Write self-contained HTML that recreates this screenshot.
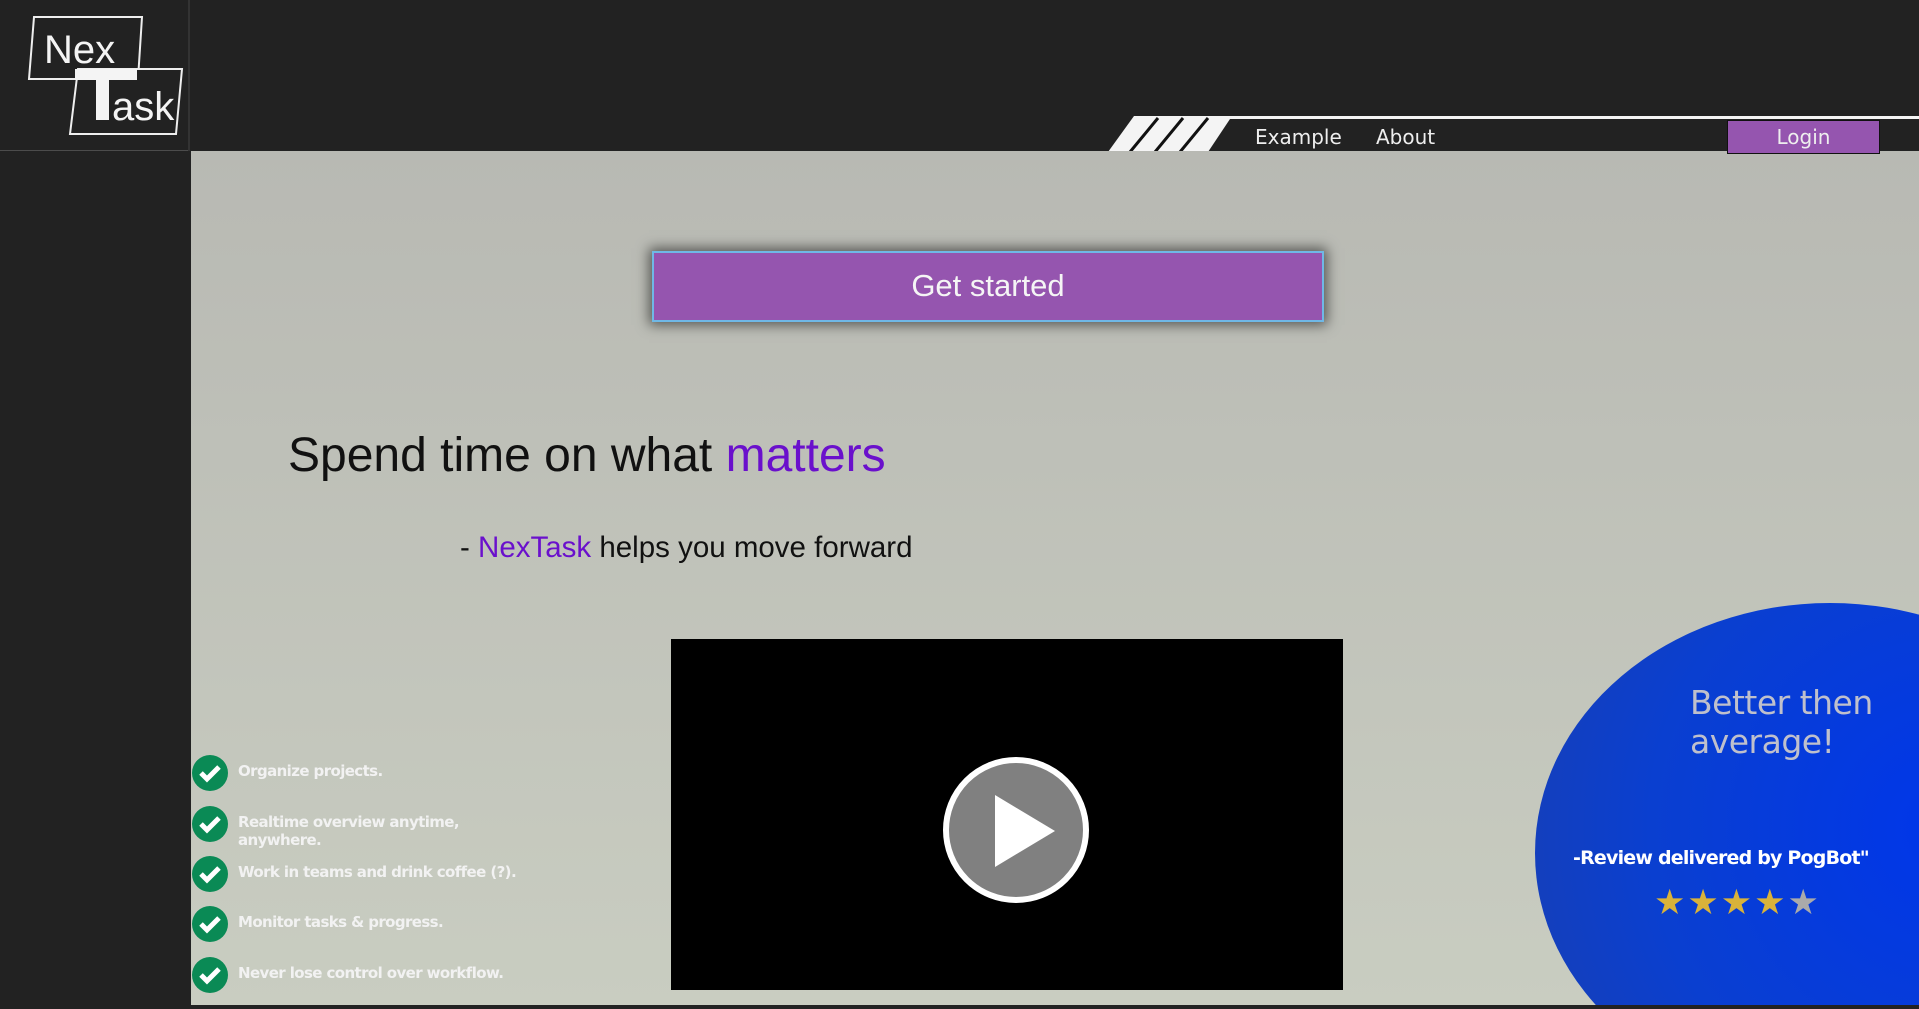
<!DOCTYPE html>
<html style="overflow:hidden"><head><meta charset="utf-8">
<style>
*{margin:0;padding:0;box-sizing:border-box}
body{width:1919px;height:1009px;background:#222;overflow:hidden;position:relative;font-family:"Liberation Sans",sans-serif}
.main{position:absolute;left:191px;top:151px;width:1728px;height:854px;background:linear-gradient(#b8b9b3,#c9cdc1);overflow:hidden}
.hdrline{position:absolute;left:1200px;top:116px;width:719px;height:3px;background:#f4f4f4}
.nav{position:absolute;top:125px;color:#eee;font-size:20px;font-family:"DejaVu Sans","Liberation Sans",sans-serif}
.login{position:absolute;left:1727px;top:120px;width:153px;height:34px;background:#9555af;border:1px solid #111;color:#eee;font-size:20px;text-align:center;line-height:32px;font-family:"DejaVu Sans",sans-serif}
.btn{position:absolute;left:461px;top:100px;width:672px;height:71px;background:#9555af;border:2px solid #6fb8e6;box-shadow:0 0 12px 3px rgba(0,0,0,.55);color:#f5f5f5;font-size:31px;text-align:center;line-height:66px}
h1{position:absolute;left:97px;top:277px;font-weight:normal;font-size:48px;color:#111;white-space:nowrap}
.p{color:#6a10cc}
.sub{position:absolute;left:269px;top:380px;font-size:29.5px;color:#111;white-space:nowrap}
.video{position:absolute;left:480px;top:488px;width:672px;height:351px;background:#000}
.feat{position:absolute;left:1px;color:#f2f2f2;font-size:15px;font-weight:bold;font-family:"DejaVu Sans",sans-serif;letter-spacing:-.6px}
.feat svg{position:absolute;left:0;top:0}
.feat span{position:absolute;left:46px;top:7px;width:280px;line-height:18px;white-space:nowrap}
.blob{position:absolute;left:1344px;top:452px;width:590px;height:500px;border-radius:50%;background:radial-gradient(circle at 70% 45%,#0036ea,#0a3fd0 60%,#1a3fb0)}
.better{position:absolute;left:1499px;top:532px;color:#bfc0cc;font-size:33px;line-height:39px;font-family:"DejaVu Sans",sans-serif;letter-spacing:-.5px}
.rev{position:absolute;left:1382px;top:696px;color:#fff;font-size:19px;font-weight:bold;font-family:"DejaVu Sans",sans-serif;letter-spacing:-.8px;white-space:nowrap}
.stars{position:absolute;left:1463px;top:732px;font-size:35px;letter-spacing:2px;white-space:nowrap}
</style></head><body>
<svg style="position:absolute;left:0;top:0" width="191" height="151">
<polygon points="34,17 142,17 138,79 29,79" fill="#222" stroke="#eee" stroke-width="2"/>
<polygon points="78,69 182,69 176,134 70,134" fill="#222" stroke="#eee" stroke-width="2"/>
<rect x="75" y="69" width="62" height="11" fill="#f4f4f4"/>
<rect x="96" y="69" width="13" height="51" fill="#f4f4f4"/>
<text x="44" y="63" font-family="Liberation Sans" font-size="40" fill="#f4f4f4">Nex</text>
<text x="112" y="120" font-family="Liberation Sans" font-size="40" fill="#f4f4f4">ask</text>
<line x1="0" y1="151" x2="190" y2="151" stroke="#777" stroke-width="1"/>
<line x1="189" y1="0" x2="189" y2="151" stroke="#333" stroke-width="2"/>
</svg>
<div class="hdrline"></div>
<svg style="position:absolute;left:1108px;top:116px" width="125" height="36">
<polygon points="26,0 124,0 100,36 0,36" fill="#f4f4f4"/>
<line x1="50" y1="2" x2="22" y2="36" stroke="#111" stroke-width="3"/>
<line x1="75" y1="2" x2="47" y2="36" stroke="#111" stroke-width="3"/>
<line x1="100" y1="2" x2="72" y2="36" stroke="#111" stroke-width="3"/>
</svg>
<div class="nav" style="left:1255px">Example</div>
<div class="nav" style="left:1376px">About</div>
<div class="main">
<div class="btn">Get started</div>
<h1>Spend time on what <span class="p">matters</span></h1>
<div class="sub">- <span class="p">NexTask</span> helps you move forward</div>
<div class="video">
<svg style="position:absolute;left:272px;top:116px" width="150" height="150">
<circle cx="73" cy="75" r="70" fill="#808080" stroke="#fff" stroke-width="6"/>
<polygon points="52,40 52,112 112,76" fill="#fff"/>
</svg></div>
<div class="feat" style="top:604px"><svg width="36" height="36"><circle cx="18" cy="18" r="18" fill="#0a8a55"/><path d="M9 18l6 6 12-12" stroke="#fff" stroke-width="5" fill="none"/></svg><span>Organize projects.</span></div>
<div class="feat" style="top:655px"><svg width="36" height="36"><circle cx="18" cy="18" r="18" fill="#0a8a55"/><path d="M9 18l6 6 12-12" stroke="#fff" stroke-width="5" fill="none"/></svg><span>Realtime overview anytime,<br>anywhere.</span></div>
<div class="feat" style="top:705px"><svg width="36" height="36"><circle cx="18" cy="18" r="18" fill="#0a8a55"/><path d="M9 18l6 6 12-12" stroke="#fff" stroke-width="5" fill="none"/></svg><span>Work in teams and drink coffee (?).</span></div>
<div class="feat" style="top:755px"><svg width="36" height="36"><circle cx="18" cy="18" r="18" fill="#0a8a55"/><path d="M9 18l6 6 12-12" stroke="#fff" stroke-width="5" fill="none"/></svg><span>Monitor tasks &amp; progress.</span></div>
<div class="feat" style="top:806px"><svg width="36" height="36"><circle cx="18" cy="18" r="18" fill="#0a8a55"/><path d="M9 18l6 6 12-12" stroke="#fff" stroke-width="5" fill="none"/></svg><span>Never lose control over workflow.</span></div>
<div class="blob"></div>
<div class="better">Better then<br>average!</div>
<div class="rev">-Review delivered by PogBot"</div>
<div class="stars"><span style="color:#d9b23a">★★★★</span><span style="color:#aaa">★</span></div>
</div>
<div class="login">Login</div>
</body></html>
